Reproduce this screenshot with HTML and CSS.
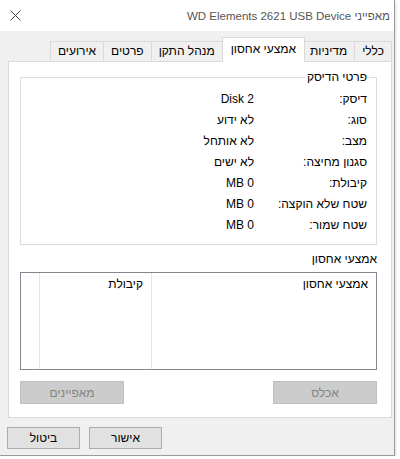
FILE: index.html
```html
<!DOCTYPE html>
<html lang="he" dir="rtl">

<head>
  <meta charset="UTF-8">
  <meta name="viewport" content="width=device-width, initial-scale=1.0">
  <title>מאפייני WD Elements 2621 USB Device</title>
  <link rel="stylesheet" href="styles.css">
</head>

<body>
  <div class="window">
    <div class="titlebar">
      <span class="title">מאפייני WD Elements 2621 USB Device</span>
      <svg class="close" width="11" height="11" viewBox="0 0 11 11">
        <path d="M0.5 0.5 L10.5 10.5 M10.5 0.5 L0.5 10.5" stroke="#444" stroke-width="1" fill="none" />
      </svg>
    </div>

    <div class="content">
      <div class="tabs">
        <div class="tab">כללי</div>
        <div class="tab">מדיניות</div>
        <div class="tab tab-active">אמצעי אחסון</div>
        <div class="tab">מנהל התקן</div>
        <div class="tab">פרטים</div>
        <div class="tab">אירועים</div>
      </div>

      <div class="panel">
        <fieldset class="group">
          <legend>פרטי הדיסק</legend>
          <div class="props">
            <div class="prop-label">דיסק:</div>
            <div class="prop-value">Disk 2</div>
            <div class="prop-label">סוג:</div>
            <div class="prop-value">לא ידוע</div>
            <div class="prop-label">מצב:</div>
            <div class="prop-value">לא אותחל</div>
            <div class="prop-label">סגנון מחיצה:</div>
            <div class="prop-value">לא ישים</div>
            <div class="prop-label">קיבולת:</div>
            <div class="prop-value">0 MB</div>
            <div class="prop-label">שטח שלא הוקצה:</div>
            <div class="prop-value">0 MB</div>
            <div class="prop-label">שטח שמור:</div>
            <div class="prop-value">0 MB</div>
          </div>
        </fieldset>

        <div class="list-label">אמצעי אחסון</div>
        <div class="list">
          <div class="col col-name">אמצעי אחסון</div>
          <div class="col col-size">קיבולת</div>
          <div class="col col-rest"></div>
        </div>

        <div class="panel-buttons">
          <button disabled>אכלס</button>
          <button disabled>מאפיינים</button>
        </div>
      </div>

      <div class="dialog-buttons">
        <button>אישור</button>
        <button>ביטול</button>
      </div>
    </div>
  </div>
</body>

</html>
```

FILE: styles.css
```css
body {
  margin: 0;
  padding: 0;
  background: #fff;
  font: 12px "Liberation Sans", "DejaVu Sans", sans-serif;
  color: #000;
}

/* the dialog sits at the top left of the screen */
.window {
  width: 395px;
  height: 456px;
  margin-right: auto;
  box-sizing: border-box;
  background: #f0f0f0;
  border-right: 1px solid #9a9a9a;
  border-bottom: 1px solid #9a9a9a;
  box-shadow: 0 2px 3px rgba(0, 0, 0, 0.25);
  display: flex;
  flex-direction: column;
}

.titlebar {
  height: 31px;
  background: #fff;
  display: flex;
  align-items: center;
  justify-content: space-between;
  padding: 0 4px 0 10px;
}

.title {
  color: #555;
  font-size: 11.5px;
}

.close {
  display: block;
}

.content {
  flex: 1;
  padding: 6px 2px 0 8px;
  display: flex;
  flex-direction: column;
}

/* tab strip */
.tabs {
  display: flex;
  height: 24px;
  align-items: flex-end;
}

.tab {
  height: 20px;
  box-sizing: border-box;
  padding: 0 7px;
  border: 1px solid #d9d9d9;
  border-bottom: none;
  margin-left: -1px;
  background: #f0f0f0;
  line-height: 19px;
  white-space: nowrap;
}

.tab-active {
  position: relative;
  z-index: 1;
  height: 25px;
  margin: 0 -2px -1px -1px;
  padding: 0 8px 2px;
  background: #fff;
  line-height: 22px;
}

/* page of the selected tab */
.panel {
  background: #fff;
  border: 1px solid #d9d9d9;
  padding: 8px 14px 13px 11px;
  display: flex;
  flex-direction: column;
}

.group {
  margin: 0;
  padding: 5px 7px 8px;
  border: 1px solid #dcdcdc;
  min-width: 0;
}

.group legend {
  padding: 0 2px;
  line-height: 14px;
}

.props {
  display: grid;
  grid-template-columns: 113px 1fr;
  padding-right: 2px;
  line-height: 21px;
}

.list-label {
  margin-top: 7px;
  line-height: 14px;
}

.list {
  margin-top: 6px;
  height: 98px;
  box-sizing: border-box;
  border: 1px solid #828790;
  display: flex;
}

.col {
  box-sizing: border-box;
  padding: 4px 8px 0 0;
  line-height: 14px;
}

.col-name {
  width: 225px;
  border-left: 1px solid #e5e5e5;
}

.col-size {
  width: 112px;
  border-left: 1px solid #e5e5e5;
}

.col-rest {
  flex: 1;
}

button {
  font: 12px "Liberation Sans", "DejaVu Sans", sans-serif;
  color: #000;
  background: #e1e1e1;
  border: 1px solid #adadad;
  border-radius: 0;
  padding: 0;
  margin: 0;
}

button:disabled {
  background: #cccccc;
  border-color: #bfbfbf;
  color: #838383;
}

.panel-buttons {
  margin-top: 11px;
  display: flex;
  justify-content: space-between;
}

.panel-buttons button {
  width: 104px;
  height: 23px;
}

.dialog-buttons {
  display: flex;
  justify-content: flex-end;
  gap: 9px;
  margin-top: 9px;
  margin-left: -1px;
}

.dialog-buttons button {
  width: 73px;
  height: 22px;
}
```
